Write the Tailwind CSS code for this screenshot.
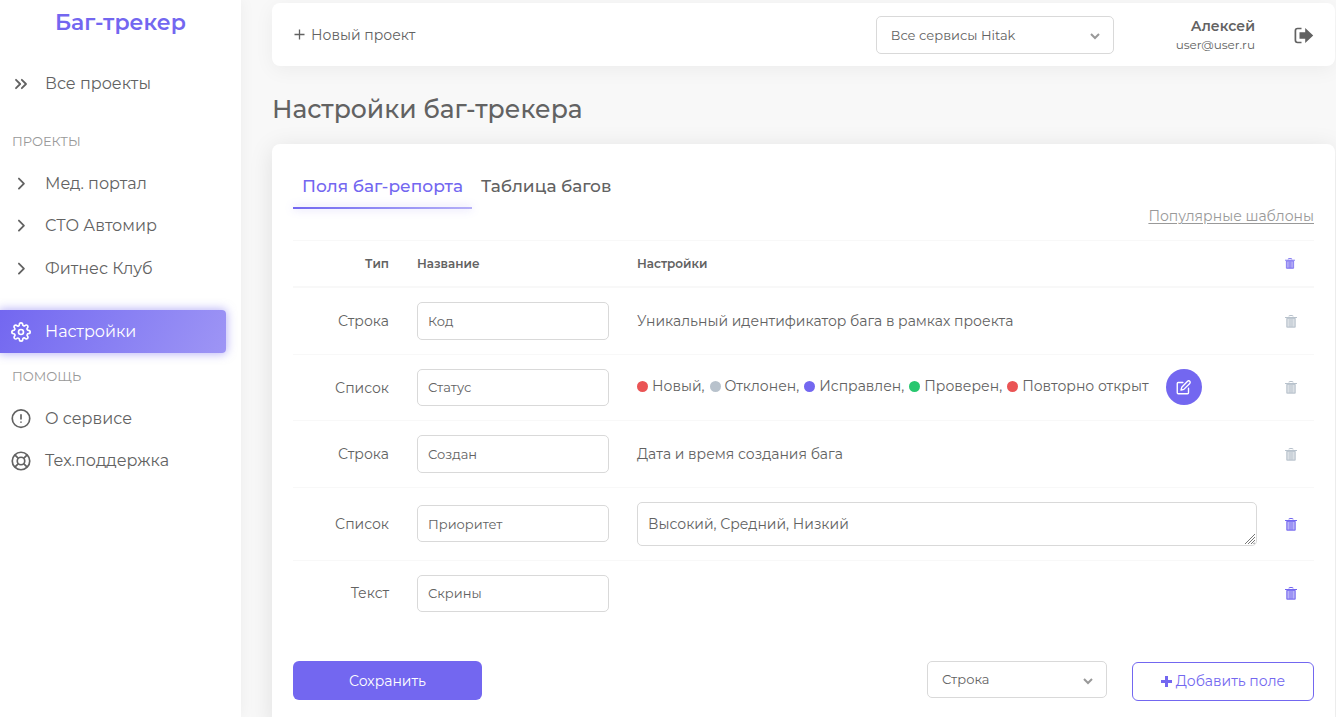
<!DOCTYPE html>
<html lang="ru">
<head>
<meta charset="utf-8">
<meta name="viewport" content="width=device-width, initial-scale=1">
<title>Баг-трекер</title>
<script src="https://cdn.jsdelivr.net/npm/@tailwindcss/browser@4"></script>
</head>
<body class="flex h-screen overflow-hidden bg-[#f8f8f8] font-['Montserrat','Inter','Noto_Sans',sans-serif] text-sm text-[#626262]">
<svg class="hidden" aria-hidden="true">
  <symbol id="chevron" viewBox="0 0 24 24"><path d="M9.500 17.500l6-6-6-6" fill="none" stroke="currentColor" stroke-width="2.2" stroke-linecap="round" stroke-linejoin="round"/></symbol>
  <symbol id="trash" viewBox="0 0 12 13"><path d="M4 1.500V1q0-.5.5-.5h3Q8 .5 8 1v.5" fill="none" stroke="currentColor"/><path d="M0 2h12v1H0z" fill="currentColor"/><path d="M1 3h10v8.500q0 1.500-1.500 1.500h-7Q1 13 1 11.500z" fill="currentColor" fill-opacity=".5"/><path d="M2 3.500h8V12H2zM5 4v8M7 4v8" fill="none" stroke="currentColor" stroke-opacity=".8"/></symbol>
</svg>

<aside class="flex w-[241px] shrink-0 flex-col bg-white shadow-[0_0_15px_rgba(0,0,0,0.05)]">
  <a href="#" class="block pt-[5px] text-center text-[22px] leading-9 font-semibold text-[#7367f0]">Баг-трекер</a>
  <nav class="flex flex-col text-base">
    <a href="#" class="mt-[21px] flex h-[43px] items-center gap-[14px] pl-[11px]">
      <svg class="size-5" viewBox="0 0 24 24" fill="none" stroke="currentColor" stroke-width="2.2" stroke-linecap="round" stroke-linejoin="round"><path d="M13 17l5-5-5-5M6 17l5-5-5-5"/></svg>Все проекты</a>
    <h2 class="mt-[18px] pl-3 text-[13px] leading-9 text-[#999]">ПРОЕКТЫ</h2>
    <a href="#" class="mt-[3px] flex h-[43px] items-center gap-[14px] pl-[11px]"><svg class="size-5"><use href="#chevron"/></svg>Мед. портал</a>
    <a href="#" class="flex h-[42px] items-center gap-[14px] pl-[11px]"><svg class="size-5"><use href="#chevron"/></svg>СТО Автомир</a>
    <a href="#" class="flex h-[43px] items-center gap-[14px] pl-[11px]"><svg class="size-5"><use href="#chevron"/></svg>Фитнес Клуб</a>
    <a href="#" class="mt-5 mr-[15px] flex h-[43px] items-center gap-[14px] rounded-r bg-linear-118 from-[#7367f0] to-[#9e95f5] pl-[11px] text-white shadow-[0_0_10px_1px_rgba(115,103,240,0.5)]">
      <svg class="size-5" viewBox="0 0 24 24" fill="none" stroke="currentColor" stroke-width="2" stroke-linecap="round" stroke-linejoin="round"><circle cx="12" cy="12" r="3"/><path d="M19.4 15a1.65 1.65 0 0 0 .33 1.82l.06.06a2 2 0 0 1 0 2.83 2 2 0 0 1-2.83 0l-.06-.06a1.65 1.65 0 0 0-1.82-.33 1.65 1.65 0 0 0-1 1.51V21a2 2 0 0 1-2 2 2 2 0 0 1-2-2v-.09A1.65 1.65 0 0 0 9 19.4a1.65 1.65 0 0 0-1.82.33l-.06.06a2 2 0 0 1-2.83 0 2 2 0 0 1 0-2.83l.06-.06a1.65 1.65 0 0 0 .33-1.82 1.65 1.65 0 0 0-1.51-1H3a2 2 0 0 1-2-2 2 2 0 0 1 2-2h.09A1.65 1.65 0 0 0 4.6 9a1.65 1.65 0 0 0-.33-1.82l-.06-.06a2 2 0 0 1 0-2.83 2 2 0 0 1 2.83 0l.06.06a1.65 1.65 0 0 0 1.82.33H9a1.65 1.65 0 0 0 1-1.51V3a2 2 0 0 1 2-2 2 2 0 0 1 2 2v.09a1.65 1.65 0 0 0 1 1.51 1.65 1.65 0 0 0 1.82-.33l.06-.06a2 2 0 0 1 2.83 0 2 2 0 0 1 0 2.83l-.06.06a1.65 1.65 0 0 0-.33 1.82V9a1.65 1.65 0 0 0 1.51 1H21a2 2 0 0 1 2 2 2 2 0 0 1-2 2h-.09a1.65 1.65 0 0 0-1.51 1z"/></svg>Настройки</a>
    <h2 class="mt-[5px] pl-3 text-[13px] leading-9 text-[#999]">ПОМОЩЬ</h2>
    <a href="#" class="mt-1 flex h-[42px] items-center gap-[14px] pl-[11px]">
      <svg class="size-5" viewBox="0 0 24 24" fill="none" stroke="currentColor" stroke-width="2" stroke-linecap="round"><circle cx="12" cy="11.5" r="10.5"/><path d="M12 7v5M12 15.8v.1"/></svg>О сервисе</a>
    <a href="#" class="flex h-[42px] items-center gap-[14px] pl-[11px]">
      <svg class="size-5" viewBox="0 0 24 24" fill="none" stroke="currentColor" stroke-width="2"><circle cx="12" cy="12" r="10.5"/><circle cx="12" cy="12" r="4.5"/><path d="M4.6 4.6l4.2 4.2M15.2 15.2l4.2 4.2M15.2 8.8l4.2-4.2M4.6 19.4l4.2-4.2"/></svg>Тех.поддержка</a>
  </nav>
</aside>

<main class="flex min-w-0 flex-1 flex-col overflow-y-auto pt-[3px] pr-px pl-[31px] [scrollbar-width:none]">
  <header class="flex h-[63px] shrink-0 items-center rounded-lg bg-white px-[21px] shadow-[0_4px_20px_rgba(0,0,0,0.05)]">
    <button type="button" class="mr-auto flex items-center gap-[5px]"><svg class="size-[13px]" viewBox="0 0 13 13" stroke="currentColor" stroke-width="1.3"><path d="M6.5 1.5v10M1.5 6.5h10"/></svg>Новый проект</button>
    <div class="relative w-[238px]">
      <select aria-label="Сервис" class="block h-[38px] w-full appearance-none rounded-[5px] border border-[#d9d9d9] bg-white pt-px pl-[14px] text-[13px]"><option>Все сервисы Hitak</option></select>
      <svg class="pointer-events-none absolute top-[14px] right-[13px] size-3 text-[#999]" viewBox="0 0 12 12" fill="none" stroke="currentColor" stroke-width="2"><path d="M2 4l4 4 4-4"/></svg>
    </div>
    <div class="ml-[62px] text-right">
      <p class="pt-px text-sm leading-5 font-semibold">Алексей</p>
      <p class="text-xs leading-[18px]">user@user.ru</p>
    </div>
    <button type="button" aria-label="Выйти" class="ml-[39px] pt-px"><svg class="h-[17px] w-5" viewBox="0 0 20 17"><path d="M7.5 1.5H3.6Q1.4 1.500 1.400 3.700v9.600q0 2.200 2.200 2.200h3.900" fill="none" stroke="currentColor" stroke-width="1.700"/><path d="M5.500 5.300h5.700V.9l8 7.600-8 7.600v-4.400H5.500z" fill="currentColor"/></svg></button>
  </header>

  <h1 class="mt-[29px] mb-[21px] shrink-0 text-[25px] leading-7 font-medium">Настройки баг-трекера</h1>

  <section class="flex-1 shrink-0 rounded-t-lg bg-white px-[21px] pt-[21px] pb-6 shadow-[0_4px_25px_rgba(0,0,0,0.1)]">
    <div class="flex items-start text-[17px] font-medium" role="tablist">
      <button type="button" role="tab" aria-selected="true" class="flex w-[179px] flex-col text-[#7367f0]"><span class="w-full pt-[5px] pb-[7px] text-center leading-8 whitespace-nowrap">Поля баг-репорта</span><span class="-mt-[2px] h-[2px] w-full bg-linear-to-r from-[#7367f0] to-[#b5aff7] shadow-[0_0_8px_rgba(115,103,240,0.4)]"></span></button>
      <button type="button" role="tab" aria-selected="false" class="px-[9px] pt-[5px] leading-8">Таблица багов</button>
    </div>
    <div class="flex h-[31px] justify-end"><a href="#" class="-mt-1 leading-[22px] text-[#999] underline underline-offset-2">Популярные шаблоны</a></div>

    <table class="w-full table-fixed">
      <colgroup><col class="w-[110px]"><col class="w-[220px]"><col><col class="w-[43px]"></colgroup>
      <thead>
        <tr class="h-[46px] border-t border-b-2 border-[#f8f8f8] text-left text-xs">
          <th class="pt-px pr-[14px] text-right font-semibold">Тип</th>
          <th class="pt-px pl-[14px] font-semibold">Название</th>
          <th class="pt-px pl-[14px] font-semibold">Настройки</th>
          <th class="pt-px pl-[14px]"><button type="button" aria-label="Удалить все" class="block text-[#7367f0]"><svg class="h-[11px] w-[10px]"><use href="#trash"/></svg></button></th>
        </tr>
      </thead>
      <tbody>
        <tr class="border-b border-[#f8f8f8]">
          <td class="pr-[14px] text-right">Строка</td>
          <td class="p-[14px]"><input aria-label="Название: Код" value="Код" class="block h-[38px] w-full rounded-[5px] border border-[#d9d9d9] px-[10px] text-[13px]"></td>
          <td class="pl-[14px]">Уникальный идентификатор бага в рамках проекта</td>
          <td class="pt-px pl-[14px]"><button type="button" disabled aria-label="Удалить Код" class="block text-[#b8c2cc]"><svg class="h-[13px] w-3"><use href="#trash"/></svg></button></td>
        </tr>
        <tr class="border-b border-[#f8f8f8]">
          <td class="pt-px pr-[14px] text-right">Список</td>
          <td class="p-[14px]"><input aria-label="Название: Статус" value="Статус" class="block h-[37px] w-full rounded-[5px] border border-[#d9d9d9] px-[10px] text-[13px]"></td>
          <td class="pl-[14px]">
            <div class="flex items-center gap-[17px] whitespace-nowrap">
              <ul class="flex gap-[5px] pb-[2px]">
                <li class="flex items-center gap-1"><i class="size-[11px] rounded-full bg-[#ea5455]"></i>Новый,</li>
                <li class="flex items-center gap-1"><i class="size-[11px] rounded-full bg-[#b8c2cc]"></i>Отклонен,</li>
                <li class="flex items-center gap-1"><i class="size-[11px] rounded-full bg-[#7367f0]"></i>Исправлен,</li>
                <li class="flex items-center gap-1"><i class="size-[11px] rounded-full bg-[#28c76f]"></i>Проверен,</li>
                <li class="flex items-center gap-1"><i class="size-[11px] rounded-full bg-[#ea5455]"></i>Повторно открыт</li>
              </ul>
              <button type="button" aria-label="Редактировать" class="flex size-9 items-center justify-center rounded-full bg-[#7367f0] text-white"><svg class="size-[15px]" viewBox="0 0 24 24" fill="none" stroke="currentColor" stroke-width="2.2" stroke-linecap="round" stroke-linejoin="round"><path d="M11 4H3.500a1.500 1.500 0 0 0-1.500 1.500V20.500A1.500 1.500 0 0 0 3.500 22H18.500a1.500 1.500 0 0 0 1.500-1.500V13"/><path d="M18.500 2a2.300 2.300 0 0 1 3.500 3.500L12.500 15l-4.500 1.200 1.200-4.500z"/></svg></button>
            </div>
          </td>
          <td class="pt-px pl-[14px]"><button type="button" disabled aria-label="Удалить Статус" class="block text-[#b8c2cc]"><svg class="h-[13px] w-3"><use href="#trash"/></svg></button></td>
        </tr>
        <tr class="border-b border-[#f8f8f8]">
          <td class="pr-[14px] text-right">Строка</td>
          <td class="p-[14px]"><input aria-label="Название: Создан" value="Создан" class="block h-[38px] w-full rounded-[5px] border border-[#d9d9d9] px-[10px] text-[13px]"></td>
          <td class="pl-[14px]">Дата и время создания бага</td>
          <td class="pt-px pl-[14px]"><button type="button" disabled aria-label="Удалить Создан" class="block text-[#b8c2cc]"><svg class="h-[13px] w-3"><use href="#trash"/></svg></button></td>
        </tr>
        <tr class="border-b border-[#f8f8f8]">
          <td class="pr-[14px] text-right">Список</td>
          <td class="px-[14px]"><input aria-label="Название: Приоритет" value="Приоритет" class="block h-[37px] w-full rounded-[5px] border border-[#d9d9d9] px-[10px] text-[13px]"></td>
          <td class="p-[14px]">
            <div class="relative">
              <textarea aria-label="Значения списка" class="block h-11 w-full resize-none rounded-[5px] border border-[#d9d9d9] px-[10px] py-[10px] leading-[22px]">Высокий, Средний, Низкий</textarea>
              <svg class="pointer-events-none absolute right-[2px] bottom-[2px] size-[10px]" viewBox="0 0 10 10" stroke="#777" stroke-width="1"><path d="M0 10L10 0M3 10l7-7M6 10l4-4M8.500 10l1.500-1.500"/></svg>
            </div>
          </td>
          <td class="pt-px pl-[14px]"><button type="button" aria-label="Удалить Приоритет" class="block text-[#7367f0]"><svg class="h-[13px] w-3"><use href="#trash"/></svg></button></td>
        </tr>
        <tr>
          <td class="pr-[14px] text-right">Текст</td>
          <td class="p-[14px]"><input aria-label="Название: Скрины" value="Скрины" class="block h-[37px] w-full rounded-[5px] border border-[#d9d9d9] px-[10px] text-[13px]"></td>
          <td></td>
          <td class="pl-[14px]"><button type="button" aria-label="Удалить Скрины" class="block text-[#7367f0]"><svg class="h-[13px] w-3"><use href="#trash"/></svg></button></td>
        </tr>
      </tbody>
    </table>

    <div class="mt-[35px] flex items-start">
      <button type="button" class="mr-auto h-[39px] w-[189px] rounded-md bg-[#7367f0] pt-px text-white">Сохранить</button>
      <div class="relative mr-[25px] w-[180px]">
        <select aria-label="Тип поля" class="block h-[37px] w-full appearance-none rounded-[5px] border border-[#d9d9d9] bg-white pt-px pl-[14px] text-[13px]"><option>Строка</option></select>
        <svg class="pointer-events-none absolute top-[14px] right-[13px] size-3 text-[#999]" viewBox="0 0 12 12" fill="none" stroke="currentColor" stroke-width="2"><path d="M2 4l4 4 4-4"/></svg>
      </div>
      <button type="button" class="mt-px flex h-[39px] w-[182px] items-center justify-center gap-1 rounded-md border border-[#7367f0] text-[#7367f0]"><svg class="size-[11px]" viewBox="0 0 11 11" stroke="currentColor" stroke-width="3"><path d="M5.500 0v11M0 5.500h11"/></svg>Добавить поле</button>
    </div>
  </section>
</main>
</body>
</html>
